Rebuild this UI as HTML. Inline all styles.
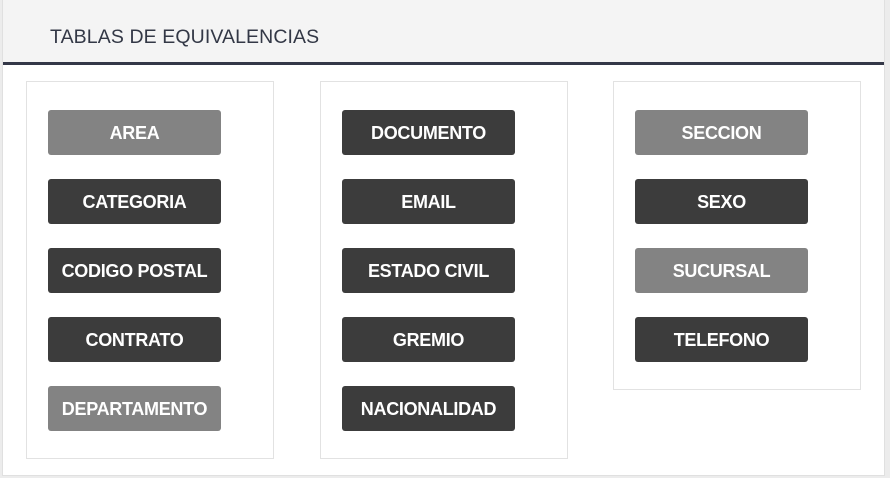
<!DOCTYPE html>
<html><head><meta charset="utf-8"><style>
*{margin:0;padding:0;box-sizing:border-box}
body{width:890px;height:478px;background:#ececec;font-family:"Liberation Sans",Arial,sans-serif;position:relative;overflow:hidden}
.panel{position:absolute;left:2px;top:0;width:883px;height:476px;background:#fff;border:1px solid #e0e0e0;border-top:none}
.head{position:absolute;left:0;top:0;width:100%;height:65px;background:#f4f4f4;border-bottom:3px solid #343848}
.head span{position:absolute;left:47px;top:26px;font-size:19.5px;color:#333846;letter-spacing:0.1px}
.box{position:absolute;top:81px;width:248px;border:1px solid #e2e2e2;background:#fff}
.btn{position:absolute;left:21px;width:173px;height:45px;border-radius:3px;color:#fff;font-weight:bold;font-size:18px;text-align:center;line-height:47px;letter-spacing:-0.3px;white-space:nowrap}
.g{background:#838383}.d{background:#3c3c3c}
</style></head><body>
<div class="panel">
<div class="head"><span>TABLAS DE EQUIVALENCIAS</span></div>
</div>
<div class="box" style="left:26px;height:378px">
<div class="btn g" style="top:28px">AREA</div>
<div class="btn d" style="top:97px">CATEGORIA</div>
<div class="btn d" style="top:166px">CODIGO POSTAL</div>
<div class="btn d" style="top:235px">CONTRATO</div>
<div class="btn g" style="top:304px">DEPARTAMENTO</div>
</div>
<div class="box" style="left:320px;height:378px">
<div class="btn d" style="top:28px">DOCUMENTO</div>
<div class="btn d" style="top:97px">EMAIL</div>
<div class="btn d" style="top:166px">ESTADO CIVIL</div>
<div class="btn d" style="top:235px">GREMIO</div>
<div class="btn d" style="top:304px">NACIONALIDAD</div>
</div>
<div class="box" style="left:613px;height:309px">
<div class="btn g" style="top:28px">SECCION</div>
<div class="btn d" style="top:97px">SEXO</div>
<div class="btn g" style="top:166px">SUCURSAL</div>
<div class="btn d" style="top:235px">TELEFONO</div>
</div>
</body></html>
